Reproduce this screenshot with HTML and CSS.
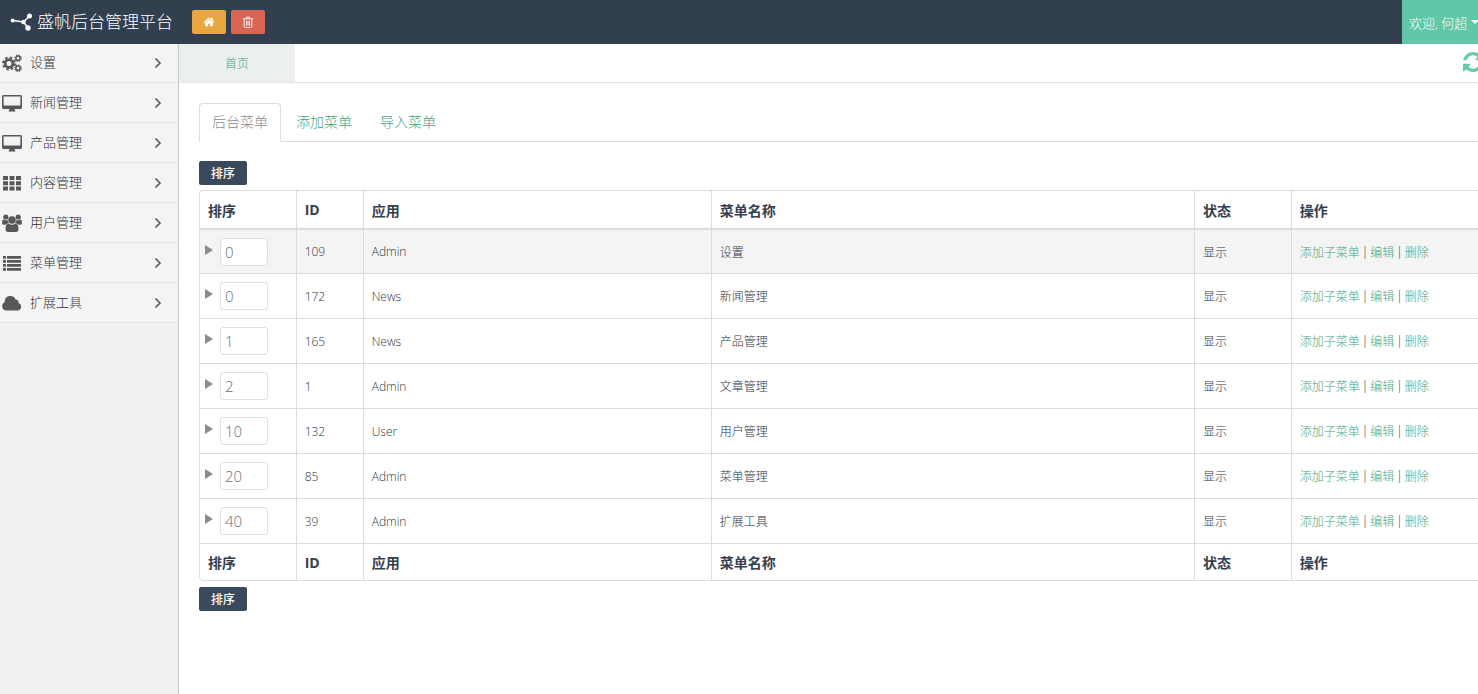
FILE: index.html
```
<!DOCTYPE html>
<html lang="zh-CN">
<head>
<meta charset="utf-8">
<title>盛帆后台管理平台</title>
<link rel="stylesheet" href="styles.css">
</head>
<body>
<svg class="sprite" aria-hidden="true">
  <symbol id="i-chevron" viewBox="0 0 8 12"><path d="M1.500 1.500 6 6 1.500 10.500" fill="none" stroke="currentColor" stroke-width="1.600"/></symbol>
  <symbol id="i-desktop" viewBox="0 0 20 18"><path fill-rule="evenodd" d="M1.500 1h17A1.500 1.500 0 0 1 20 2.500v11a1.500 1.500 0 0 1-1.500 1.500H12.500q0 1 .8 1.500v1H6.700v-1q.8-.5.8-1.500H1.500A1.500 1.500 0 0 1 0 13.500v-11A1.500 1.500 0 0 1 1.500 1zM1.600 2.600v8.800h16.800V2.600z"/></symbol>
  <symbol id="i-th" viewBox="0 0 20 18"><path d="M1 2h5v4H1zM7.500 2h5v4h-5zM14 2h5v4h-5zM1 7.200h5v4H1zM7.500 7.200h5v4h-5zM14 7.200h5v4h-5zM1 12.500h5v4H1zM7.500 12.500h5v4h-5zM14 12.500h5v4h-5z"/></symbol>
  <symbol id="i-list" viewBox="0 0 20 18"><path d="M1 2h3v2.700H1zM5 2h14v2.700H5zM1 6h3v2.700H1zM5 6h14v2.700H5zM1 10h3v2.700H1zM5 10h14v2.700H5zM1 14h3v2.700H1zM5 14h14v2.700H5z"/></symbol>
  <symbol id="i-cloud" viewBox="0 0 20 18"><path d="M4.500 16.500A4.500 4.500 0 0 1 2.800 7.900 5.600 5.600 0 0 1 13.600 5.500 3.200 3.200 0 0 1 16.500 9 3.900 3.900 0 0 1 16 16.500z"/></symbol>
  <symbol id="i-users" viewBox="0 0 20 18"><circle cx="3.800" cy="3" r="2.600"/><circle cx="16.200" cy="3" r="2.600"/><path d="M0 9.500Q0 5.500 1.500 5.500q2 1.300 4.300.4Q5.700 8 7 9.300q-2 0-3.200 1.400H2Q0 10.700 0 9.500zM20 9.500q0-4-1.500-4-2 1.300-4.300.4.1 2.100-1.200 3.400 2 0 3.200 1.400H18q2 0 2-1.200z"/><circle cx="10" cy="6" r="3.800"/><path d="M6.500 9.500q3.500 2.500 7 0 3 .5 3 5.500 0 3-2.500 3H6q-2.500 0-2.500-3 0-5 3-5.500z"/></symbol>
  <symbol id="i-gears" viewBox="0 0 20 18"><g fill="none" stroke="currentColor"><circle cx="7" cy="9.500" r="3.900" stroke-width="2.800"/><circle cx="7" cy="9.500" r="6" stroke-width="1.900" stroke-dasharray="2.500 2.212"/><circle cx="16" cy="4.200" r="2.100" stroke-width="1.500"/><circle cx="16" cy="4.200" r="3.200" stroke-width="1.200" stroke-dasharray="1.400 1.113"/><circle cx="16" cy="14.200" r="2.100" stroke-width="1.500"/><circle cx="16" cy="14.200" r="3.200" stroke-width="1.200" stroke-dasharray="1.400 1.113"/></g></symbol>
  <symbol id="i-home" viewBox="0 0 1792 1792"><path d="M1472 992v480q0 26-19 45t-45 19h-384v-384h-256v384h-384q-26 0-45-19t-19-45v-480q0-1 .5-3t.5-3l575-474 575 474q1 2 1 6zm223-69l-62 74q-8 9-21 11h-3q-13 0-21-7l-692-577-692 577q-12 8-24 7-13-2-21-11l-62-74q-8-10-7-23.500t11-21.500l719-599q32-26 76-26t76 26l244 204v-195q0-14 9-23t23-9h192q14 0 23 9t9 23v408l219 182q10 8 11 21.500t-7 23.500z"/></symbol>
  <symbol id="i-trash" viewBox="0 0 12 12"><path d="M.8 2.800h10.400M4 2.600l.5-1.500h3L8 2.600M2.200 3v7.300q0 1.100 1 1.100h5.600q1 0 1-1.100V3M4.500 4.800v4.700M6 4.800v4.700M7.500 4.800v4.700" fill="none" stroke="currentColor" stroke-width=".9"/></symbol>
  <symbol id="i-refresh" viewBox="128 128 1536 1536"><path d="M1639 1056q0 5-1 7-64 268-268 434.500t-478 166.500q-146 0-282.500-55t-243.500-157l-129 129q-19 19-45 19t-45-19-19-45v-448q0-26 19-45t45-19h448q26 0 45 19t19 45-19 45l-137 137q71 66 161 102t187 36q134 0 250-65t186-179q11-17 53-117 8-23 30-23h192q13 0 22.500 9.500t9.500 22.500zm25-800v448q0 26-19 45t-45 19h-448q-26 0-45-19t-19-45 19-45l138-138q-148-137-349-137-134 0-250 65t-186 179q-11 17-53 117-8 23-30 23h-199q-13 0-22.500-9.500t-9.500-22.500v-7q65-268 270-434.500t480-166.500q146 0 284 55.500t245 156.500l130-129q19-19 45-19t45 19 19 45z"/></symbol>
</svg>
<header class="topbar">
  <a class="brand" href="#">
    <svg class="logo" viewBox="0 0 22 18"><path d="M2.500 7.500 13 9l6-6M13 9l4.500 6" fill="none" stroke="currentColor" stroke-width="1.500"/><circle cx="2.200" cy="7.400" r="2"/><circle cx="13" cy="9" r="2.200"/><circle cx="19" cy="3" r="2.500"/><circle cx="17.500" cy="15" r="2.700"/></svg>
    <span>盛帆后台管理平台</span>
  </a>
  <button class="tool tool-home" type="button" aria-label="首页"><svg><use href="#i-home"/></svg></button>
  <button class="tool tool-trash" type="button" aria-label="清空"><svg><use href="#i-trash"/></svg></button>
  <button class="user" type="button">欢迎, 何超<span class="caret"></span></button>
</header>
<div class="shell">
  <nav class="sidebar">
    <a href="#"><svg class="icon"><use href="#i-gears"/></svg><span>设置</span><svg class="chev"><use href="#i-chevron"/></svg></a>
    <a href="#"><svg class="icon"><use href="#i-desktop"/></svg><span>新闻管理</span><svg class="chev"><use href="#i-chevron"/></svg></a>
    <a href="#"><svg class="icon"><use href="#i-desktop"/></svg><span>产品管理</span><svg class="chev"><use href="#i-chevron"/></svg></a>
    <a href="#"><svg class="icon"><use href="#i-th"/></svg><span>内容管理</span><svg class="chev"><use href="#i-chevron"/></svg></a>
    <a href="#"><svg class="icon"><use href="#i-users"/></svg><span>用户管理</span><svg class="chev"><use href="#i-chevron"/></svg></a>
    <a href="#"><svg class="icon"><use href="#i-list"/></svg><span>菜单管理</span><svg class="chev"><use href="#i-chevron"/></svg></a>
    <a href="#"><svg class="icon"><use href="#i-cloud"/></svg><span>扩展工具</span><svg class="chev"><use href="#i-chevron"/></svg></a>
  </nav>
  <main class="main">
    <div class="pagebar">
      <a class="page-tab" href="#">首页</a>
      <button class="refresh" type="button" aria-label="刷新"><svg><use href="#i-refresh"/></svg></button>
    </div>
    <div class="content">
      <div class="tabs">
        <a class="tab active" href="#">后台菜单</a>
        <a class="tab" href="#">添加菜单</a>
        <a class="tab" href="#">导入菜单</a>
      </div>
      <form class="list">
        <button class="sort" type="button">排序</button>
        <table class="menus">
          <colgroup><col class="c-sort"><col class="c-id"><col class="c-app"><col class="c-name"><col class="c-state"><col class="c-ops"></colgroup>
          <thead><tr><th>排序</th><th>ID</th><th>应用</th><th>菜单名称</th><th>状态</th><th>操作</th></tr></thead>
          <tbody>
            <tr class="hover"><td><div class="order"><span class="expander"></span><input type="text" value="0" aria-label="排序 109"></div></td><td>109</td><td>Admin</td><td>设置</td><td>显示</td><td><div class="ops"><a href="#">添加子菜单</a><span>|</span><a href="#">编辑</a><span>|</span><a href="#">删除</a></div></td></tr>
            <tr><td><div class="order"><span class="expander"></span><input type="text" value="0" aria-label="排序 172"></div></td><td>172</td><td>News</td><td>新闻管理</td><td>显示</td><td><div class="ops"><a href="#">添加子菜单</a><span>|</span><a href="#">编辑</a><span>|</span><a href="#">删除</a></div></td></tr>
            <tr><td><div class="order"><span class="expander"></span><input type="text" value="1" aria-label="排序 165"></div></td><td>165</td><td>News</td><td>产品管理</td><td>显示</td><td><div class="ops"><a href="#">添加子菜单</a><span>|</span><a href="#">编辑</a><span>|</span><a href="#">删除</a></div></td></tr>
            <tr><td><div class="order"><span class="expander"></span><input type="text" value="2" aria-label="排序 1"></div></td><td>1</td><td>Admin</td><td>文章管理</td><td>显示</td><td><div class="ops"><a href="#">添加子菜单</a><span>|</span><a href="#">编辑</a><span>|</span><a href="#">删除</a></div></td></tr>
            <tr><td><div class="order"><span class="expander"></span><input type="text" value="10" aria-label="排序 132"></div></td><td>132</td><td>User</td><td>用户管理</td><td>显示</td><td><div class="ops"><a href="#">添加子菜单</a><span>|</span><a href="#">编辑</a><span>|</span><a href="#">删除</a></div></td></tr>
            <tr><td><div class="order"><span class="expander"></span><input type="text" value="20" aria-label="排序 85"></div></td><td>85</td><td>Admin</td><td>菜单管理</td><td>显示</td><td><div class="ops"><a href="#">添加子菜单</a><span>|</span><a href="#">编辑</a><span>|</span><a href="#">删除</a></div></td></tr>
            <tr><td><div class="order"><span class="expander"></span><input type="text" value="40" aria-label="排序 39"></div></td><td>39</td><td>Admin</td><td>扩展工具</td><td>显示</td><td><div class="ops"><a href="#">添加子菜单</a><span>|</span><a href="#">编辑</a><span>|</span><a href="#">删除</a></div></td></tr>
          </tbody>
          <tfoot><tr><th>排序</th><th>ID</th><th>应用</th><th>菜单名称</th><th>状态</th><th>操作</th></tr></tfoot>
        </table>
        <button class="sort" type="button">排序</button>
      </form>
    </div>
  </main>
</div>
</body>
</html>
```

FILE: styles.css
```
* { box-sizing: border-box; }
body {
  margin: 0;
  min-height: 100vh;
  display: flex;
  flex-direction: column;
  overflow: hidden;
  background: #fff;
  color: #2c3644;
  font-family: "Open Sans", "Noto Sans CJK SC", sans-serif;
  font-size: 12px;
  font-weight: 300;
}
a { color: #3fa57e; text-decoration: none; }
button, input { font: inherit; margin: 0; padding: 0; border: 0; }
svg { fill: currentColor; flex: none; }
.sprite { position: absolute; width: 0; height: 0; }

.topbar {
  display: flex;
  align-items: center;
  height: 44px;
  background: #323f4f;
  color: #fff;
}
.brand {
  display: flex;
  align-items: center;
  gap: 4px;
  padding-left: 10px;
  margin-right: 19px;
  color: #fff;
  font-size: 17px;
  line-height: 24px;
}
.logo { width: 23px; height: 18px; }
.tool {
  display: flex;
  align-items: center;
  justify-content: center;
  width: 34px;
  height: 24px;
  margin-right: 5px;
  border-radius: 2px;
  color: #fff;
}
.tool svg { width: 12px; height: 12px; }
.tool-home { background: #e8a740; }
.tool-trash { background: #d86657; }
.user {
  display: flex;
  align-items: center;
  gap: 4px;
  align-self: stretch;
  width: 76px;
  margin-left: auto;
  padding-left: 7px;
  background: #60c8a9;
  color: #fff;
  font-size: 13px;
  white-space: nowrap;
}
.caret {
  flex: none;
  border: 4px solid transparent;
  border-top-color: #fff;
  border-bottom: 0;
}

.shell { display: flex; flex: 1; }
.sidebar {
  flex: none;
  width: 179px;
  border-right: 1px solid #c8c8c8;
  background: #f1f1f1;
}
.sidebar a {
  display: flex;
  align-items: center;
  height: 40px;
  padding: 0 16px 0 2px;
  border-bottom: 1px solid #e0e0e0;
  background: #f4f4f4;
  color: #585858;
  font-size: 13px;
  line-height: 20px;
}
.sidebar a:first-child { height: 39px; }
.sidebar span { flex: 1; margin-left: 8px; padding-bottom: 2px; color: #333; }
.icon { width: 20px; height: 18px; }
.chev { width: 8px; height: 12px; }

.main { flex: 1; min-width: 0; }
.pagebar {
  display: flex;
  justify-content: space-between;
  height: 39px;
  border-bottom: 1px solid #e3e5e5;
}
.page-tab {
  display: flex;
  align-items: center;
  justify-content: center;
  width: 116px;
  background: #ebefef;
}
.refresh {
  align-self: center;
  margin-right: -5px;
  padding-bottom: 2px;
  background: none;
  color: #66caaa;
}
.refresh svg { display: block; width: 20px; height: 20px; }

.content { padding: 20px 0 0 20px; }
.tabs {
  display: flex;
  gap: 2px;
  border-bottom: 1px solid #dcdcdc;
}
.tab {
  height: 38px;
  margin-bottom: -1px;
  padding: 0 12px;
  border: 1px solid transparent;
  font-size: 14px;
  line-height: 36px;
}
.tab.active {
  height: 39px;
  border-color: #dcdcdc;
  border-bottom-color: #fff;
  border-radius: 4px 4px 0 0;
  background: #fff;
  color: #858b90;
}
.list { padding-top: 19px; }
.sort {
  display: block;
  width: 48px;
  height: 24px;
  border-radius: 2px;
  background: #3a4a5e;
  color: #fff;
  font-weight: 500;
}

.menus {
  width: calc(100% + 12px);
  margin: 5px 0 6px;
  table-layout: fixed;
  border: 1px solid #dcdcdc;
  border-radius: 4px;
  border-spacing: 0;
}
.c-sort, .c-state { width: 7.5%; }
.c-id { width: 5.2%; }
.c-app { width: 27%; }
.c-name { width: 37.5%; }
.menus th, .menus td {
  padding: 0 8px;
  border-right: 1px solid #dcdcdc;
  text-align: left;
}
.menus th { height: 36px; color: #34404f; font-size: 14px; font-weight: 700; }
.menus thead th { height: 39px; border-bottom: 2px solid #dcdcdc; }
.menus td { height: 45px; border-bottom: 1px solid #dcdcdc; }
.menus tbody tr:first-child td { height: 44px; }
.menus .hover { background: #f4f4f4; }
.menus td:first-child { padding-left: 5px; }
.ops { display: flex; gap: 2px; }
.order { display: flex; align-items: center; gap: 7px; }
.expander {
  height: 10px;
  margin-bottom: 4px;
  border: 5px solid transparent;
  border-left: 8px solid #8c8c8c;
  border-right: 0;
}
.order input {
  width: 48px;
  height: 28px;
  padding: 0 4px;
  border: 1px solid #dde2e8;
  border-radius: 3px;
  background: #fff;
  color: #687276;
  font-size: 15px;
}
```
